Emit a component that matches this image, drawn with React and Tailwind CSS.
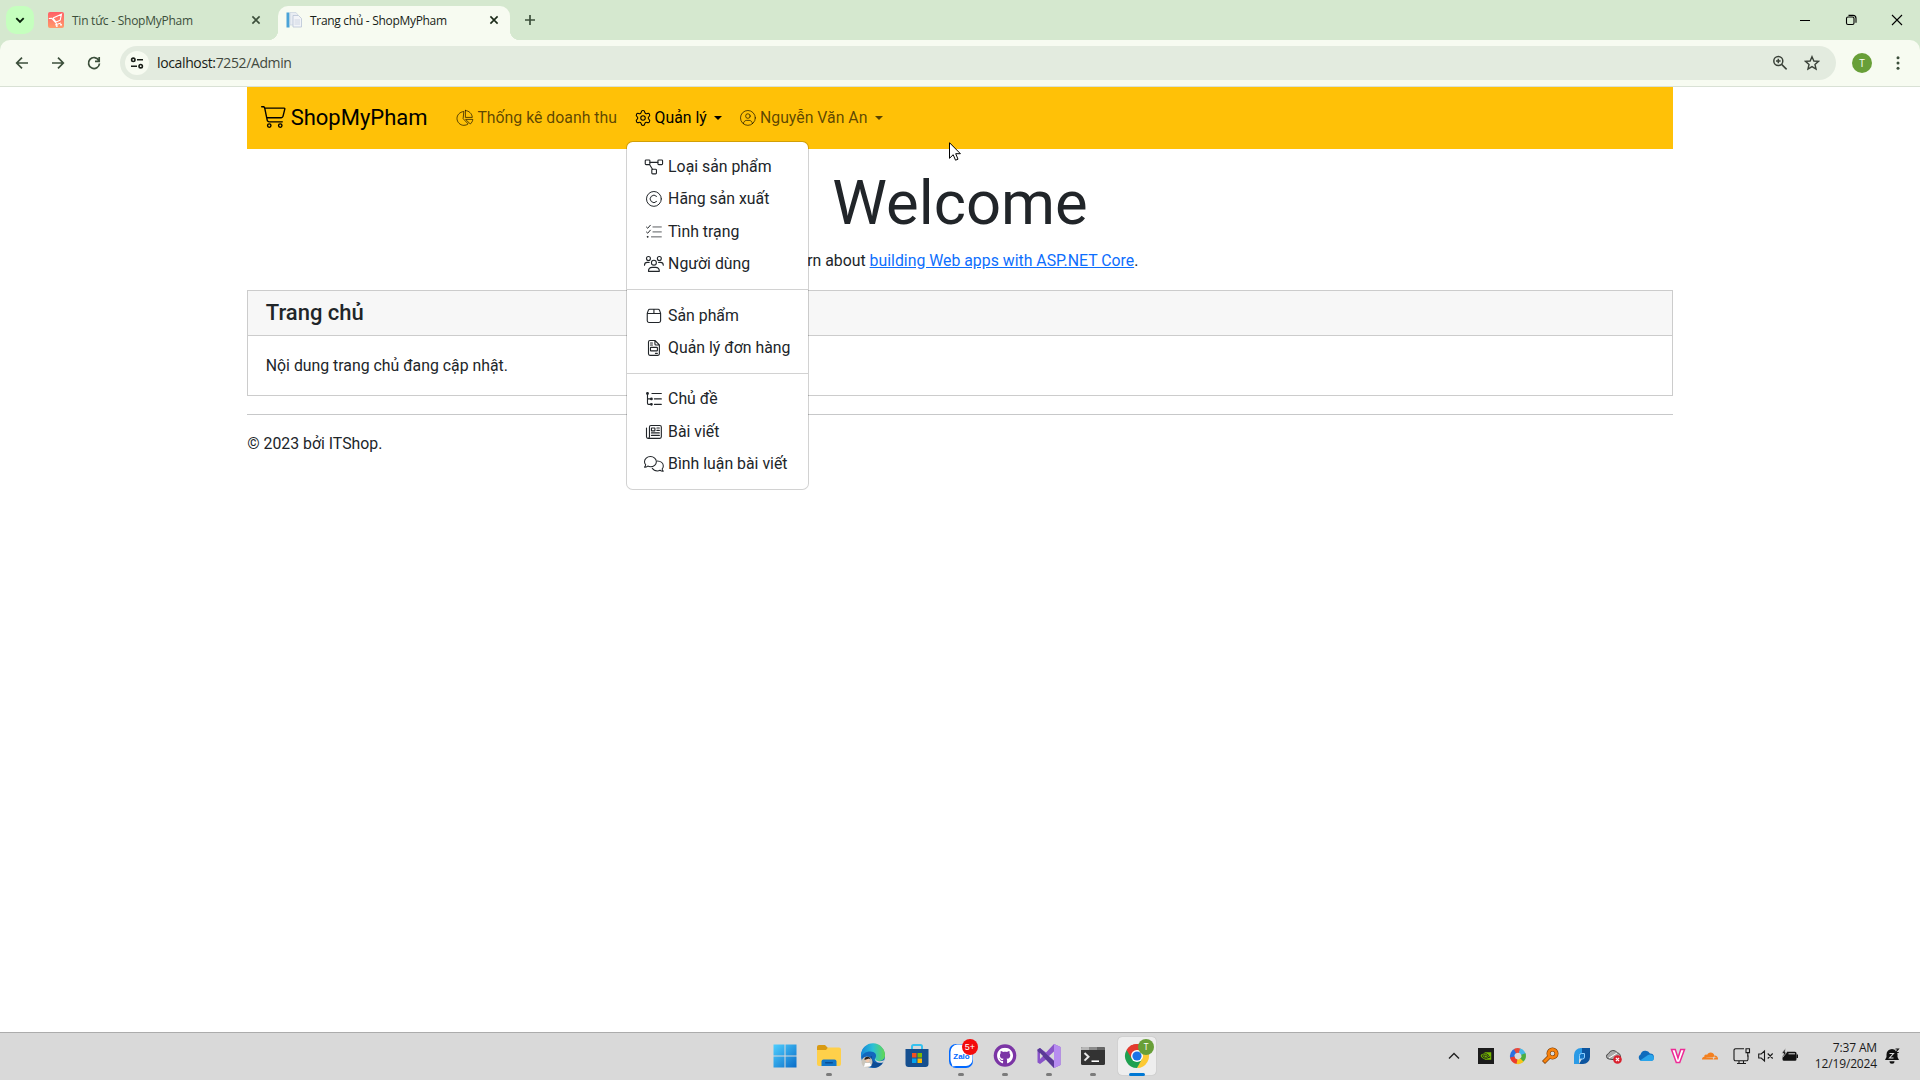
import React from "react";
import { Settings } from "lucide-react";
import { FaGithub } from "react-icons/fa";
import { SiNvidia, SiCloudflare } from "react-icons/si";

/* ---------- thin outline icons used by the site ---------- */

function Line({ w = 512, size = 15.84, sw = 32, children }) {
  return (
    <svg
      viewBox={`0 0 ${w} 512`}
      width={(size * w) / 512}
      height={size}
      fill="none"
      stroke="currentColor"
      strokeWidth={sw}
      strokeLinecap="round"
      strokeLinejoin="round"
      className="shrink-0 overflow-visible"
    >
      {children}
    </svg>
  );
}

const CartIcon = () => (
  <Line w={576} size={22}>
    <path
      fill="currentColor"
      stroke="none"
      d="M16 0C7.2 0 0 7.2 0 16s7.2 16 16 16H53.9c7.6 0 14.2 5.3 15.7 12.8l58.9 288c6.1 29.8 32.3 51.2 62.7 51.2H496c8.8 0 16-7.2 16-16s-7.2-16-16-16H191.2c-15.2 0-28.3-10.7-31.4-25.6L152 288H466.5c29.4 0 55-20 62.1-48.5L570.6 71.8c5-20.2-10.2-39.8-31-39.8H99.1C92.5 13 74.4 0 53.9 0H16zm90.1 64H539.5L497.6 231.8C494 246 481.2 256 466.5 256H145.4L106.1 64zM168 456a24 24 0 1 1 48 0 24 24 0 1 1 -48 0zm80 0a56 56 0 1 0 -112 0 56 56 0 1 0 112 0zm200-24a24 24 0 1 1 0 48 24 24 0 1 1 0-48zm0 80a56 56 0 1 0 0-112 56 56 0 1 0 0 112z"
    />
  </Line>
);

const PieIcon = () => (
  <Line w={576}>
    <path d="M304 17v223h223C520 120 424 24 304 17z" />
    <path d="M240 50C120 65 32 160 32 272c0 123 101 224 224 224 52 0 98-16 137-46L240 290z" />
    <path d="M322 304h222c-7 56-32 104-72 140z" />
  </Line>
);

const UserIcon = () => (
  <Line>
    <circle cx="256" cy="256" r="240" />
    <circle cx="256" cy="196" r="74" />
    <path d="M108 440c8-60 52-104 108-104h80c56 0 100 44 108 104" />
  </Line>
);

const DiagramIcon = () => (
  <Line w={576} sw={36}>
    <rect x="8" y="32" width="150" height="150" rx="28" />
    <rect x="418" y="32" width="150" height="150" rx="28" />
    <rect x="220" y="330" width="150" height="150" rx="28" />
    <path d="M158 108h260M146 176l96 154" />
  </Line>
);

const CopyrightIcon = () => (
  <Line>
    <circle cx="256" cy="256" r="240" />
    <path d="M341 341a120 120 0 1 1 0-170" />
  </Line>
);

const ListCheckIcon = () => (
  <Line>
    <path d="M16 100l40 38 84-98M16 260l40 38 84-98" />
    <path d="M224 96h272M224 256h272M176 416h320" opacity=".75" />
    <circle cx="48" cy="416" r="14" fill="currentColor" />
  </Line>
);

const UsersIcon = () => (
  <Line w={640} sw={36}>
    <circle cx="144" cy="80" r="64" />
    <circle cx="496" cy="80" r="64" />
    <circle cx="320" cy="216" r="80" />
    <path d="M16 298c0-50 42-90 92-90h58M624 298c0-50-42-90-92-90h-58" />
    <path d="M144 496c0-74 54-128 120-128h112c66 0 120 54 120 128z" />
  </Line>
);

const BoxIcon = () => (
  <Line w={448} sw={36}>
    <path d="M8 176v240c0 30 20 52 52 52h328c32 0 52-22 52-52V176zM8 176l34-100c8-24 24-36 48-36h268c24 0 40 12 48 36l34 100M224 40v136" />
  </Line>
);

const InvoiceIcon = () => (
  <Line w={384} sw={36}>
    <path d="M64 16h160l144 144v288c0 27-21 48-48 48H64c-27 0-48-21-48-48V64c0-27 21-48 48-48zM224 16v112c0 18 14 32 32 32h112M80 96h64M80 160h64M240 432h64" />
    <rect x="80" y="240" width="224" height="112" rx="16" />
  </Line>
);

const TreeIcon = () => (
  <Line sw={36}>
    <g fill="currentColor">
      <circle cx="48" cy="80" r="28" />
      <circle cx="176" cy="256" r="26" />
      <circle cx="176" cy="432" r="26" />
    </g>
    <path d="M48 80v320c0 18 14 32 32 32h96M48 256h128M192 80h304M272 256h224M272 432h224" />
  </Line>
);

const NewsIcon = () => (
  <Line sw={36}>
    <path d="M160 48h288c27 0 48 21 48 48v320c0 27-21 48-48 48H64c-27 0-48-21-48-48V128M64 464c27 0 48-21 48-48V96c0-27 21-48 48-48" />
    <rect x="176" y="128" width="112" height="96" rx="8" />
    <path d="M352 128h80M352 208h80M176 288h256M176 368h256" />
  </Line>
);

const CommentsIcon = () => (
  <Line w={640} sw={34}>
    <path d="M208 16C100 16 16 92 16 184c0 38 14 72 38 98-4 34-22 58-38 80 44 4 80-16 106-36 26 14 56 24 86 24 108 0 192-74 192-166S316 16 208 16z" />
    <path d="M432 160c108 4 192 72 192 162 0 38-14 70-38 98 4 32 22 52 38 72-44 4-80-12-106-32-26 14-56 22-86 22-70 0-132-34-166-86" />
  </Line>
);

/* ---------- browser chrome ---------- */

function Stroke({ size = 16, sw = 1.7, className = "", children }) {
  return (
    <svg
      viewBox="0 0 16 16"
      width={size}
      height={size}
      fill="none"
      stroke="currentColor"
      strokeWidth={sw}
      className={`shrink-0 ${className}`}
    >
      {children}
    </svg>
  );
}

const CloseX = () => (
  <Stroke sw={1.6}>
    <path d="M4.4 4.4l7.2 7.2M11.6 4.4l-7.2 7.2" />
  </Stroke>
);

function TabStrip() {
  return (
    <div className="flex h-10 items-start bg-[#d5e8cf] text-[#1b2a19]">
      <div className="ml-1.5 mt-1.5 flex size-7 items-center justify-center rounded-[10px] bg-[#c5ffbe] text-[#08210a]">
        <Stroke sw={1.9}>
          <path d="M4.3 6.2L8 9.9l3.7-3.7" />
        </Stroke>
      </div>
      <div className="ml-3.5 mt-1.5 flex h-7 w-[230px] items-center text-[#3c4f3b]">
        <svg viewBox="0 0 16 16" width="16" height="16" className="shrink-0">
          <defs>
            <linearGradient id="shop" x1="0" y1="0" x2="0" y2="1">
              <stop offset="0" stopColor="#ff5f67" />
              <stop offset="1" stopColor="#ff9b6b" />
            </linearGradient>
          </defs>
          <rect width="16" height="16" rx="2" fill="url(#shop)" />
          <path
            d="M.8 6.500l3-.2 5 5.700M5 6l8.500-3.800-1.300 6-4.700 2M5 6l3 4"
            stroke="#fff"
            strokeWidth="1.100"
            fill="none"
          />
          <path d="M7 13l6-2" stroke="#fff" />
          <circle cx="8.800" cy="14" r="1" fill="#fff" />
          <circle cx="13" cy="12.800" r="1" fill="#fff" />
        </svg>
        <span className="ml-2 w-[176px] whitespace-nowrap pt-0.5 text-[12px] tracking-[-0.25px]">
          Tin tức - ShopMyPham
        </span>
        <CloseX />
      </div>
      <div className="relative mt-1.5 flex h-[34px] w-[232px] items-center rounded-t-[10px] bg-[#f7fbf1] pb-1.5 pl-2">
        <div className="absolute -left-2.5 bottom-0 size-2.5 bg-[radial-gradient(circle_at_0_0,transparent_10px,#f7fbf1_10.5px)]" />
        <div className="absolute -right-2.5 bottom-0 size-2.5 bg-[radial-gradient(circle_at_100%_0,transparent_10px,#f7fbf1_10.5px)]" />
        <svg viewBox="0 0 16 16" width="16" height="16" className="shrink-0">
          <rect x="0.500" y="0.500" width="3" height="15" fill="#4aa3d8" />
          <path d="M4 .5h6l2 2.500v10H4z" fill="#e9edf3" stroke="#c9d2df" strokeWidth=".7" />
          <path d="M7 3.500h5.500l3 3v8.500H7z" fill="#f2f4f8" stroke="#b9c4d6" strokeWidth=".8" />
          <path d="M8.500 8h5.500M8.500 10h5.500M8.500 12h5.500" stroke="#c7cfdd" strokeWidth=".8" />
        </svg>
        <span className="ml-2 w-[176px] whitespace-nowrap pt-0.5 text-[12px] tracking-[-0.3px] text-[#181d17]">
          Trang chủ - ShopMyPham
        </span>
        <CloseX />
      </div>
      <div className="ml-3 mt-3 text-[#3c4f3b]">
        <Stroke sw={1.700}>
          <path d="M8 3v10M3 8h10" />
        </Stroke>
      </div>
      <div className="ml-auto flex h-10 items-center text-black">
        <div className="flex w-[46px] justify-center">
          <Stroke sw={1}>
            <path d="M3 8.500h10" />
          </Stroke>
        </div>
        <div className="flex w-[46px] justify-center">
          <Stroke sw={1.100}>
            <rect x="3.500" y="5" width="7.500" height="7.500" rx="1.500" />
            <path d="M5.500 3.400h4.500a3 3 0 0 1 3 3v4.300" />
          </Stroke>
        </div>
        <div className="flex w-[46px] justify-center">
          <Stroke sw={1.100}>
            <path d="M3 3l10 10M13 3L3 13" />
          </Stroke>
        </div>
      </div>
    </div>
  );
}

function Toolbar() {
  return (
    <div className="bg-[#d5e8cf]">
      <div className="flex h-[47px] items-center rounded-t-[10px] border-b border-[#d9e1d5] bg-[#f7fbf1] text-[#3c4f3b]">
        <div className="ml-3.5 flex gap-5">
          <Stroke>
            <path d="M14 8H3M8 2.700L2.700 8 8 13.300" />
          </Stroke>
          <Stroke>
            <path d="M2 8h11M8 2.700L13.300 8 8 13.300" />
          </Stroke>
          <Stroke>
            <path d="M12.800 5.300A5.500 5.500 0 1 0 13.500 8.500M13.200 2v4.300H9" />
          </Stroke>
        </div>
        <div className="ml-[18px] flex h-[34px] w-[1716px] items-center rounded-full bg-[#e3ebdf] pl-[5px]">
          <div className="flex size-6 items-center justify-center rounded-full bg-[#f7fbf1] text-[#181d17]">
            <Stroke sw={1.600}>
              <circle cx="4.300" cy="4.800" r="1.700" />
              <path d="M8 4.800h6M2 11.200h6" />
              <circle cx="11.700" cy="11.200" r="1.700" />
            </Stroke>
          </div>
          <span className="ml-[8px] text-[14px] leading-5 tracking-[-0.370px] text-[#181d17]">
            localhost:<span className="text-[#424940]">7252/Admin</span>
          </span>
          <div className="ml-auto mr-4 flex gap-4 text-[#3a4138]">
            <Stroke size={16} sw={1.500}>
              <circle cx="6.300" cy="6" r="4.500" />
              <path d="M9.600 9.400l5 5M4 6h4.600M6.300 3.700v4.600" />
            </Stroke>
            <Stroke size={16} sw={1.400}>
              <path d="M8 1.700l1.850 4.300 4.650.4-3.530 3.070 1.060 4.560L8 11.600l-4.030 2.430 1.060-4.560L1.500 6.400l4.650-.4z" />
            </Stroke>
          </div>
        </div>
        <div className="ml-4 flex size-5 items-center justify-center rounded-full bg-[#689f38] text-[10px] text-white">
          T
        </div>
        <svg viewBox="0 0 16 16" width="16" height="16" className="ml-[18px]" fill="currentColor">
          <circle cx="8" cy="2.700" r="1.500" />
          <circle cx="8" cy="8" r="1.500" />
          <circle cx="8" cy="13.300" r="1.500" />
        </svg>
      </div>
    </div>
  );
}

/* ---------- site ---------- */

const Caret = () => (
  <span className="ml-[4px] inline-block border-x-[4.75px] border-t-[4.75px] border-x-transparent border-t-current" />
);

const GROUPS = [
  [
    [DiagramIcon, "Loại sản phẩm"],
    [CopyrightIcon, "Hãng sản xuất"],
    [ListCheckIcon, "Tình trạng"],
    [UsersIcon, "Người dùng"],
  ],
  [
    [BoxIcon, "Sản phẩm"],
    [InvoiceIcon, "Quản lý đơn hàng"],
  ],
  [
    [TreeIcon, "Chủ đề"],
    [NewsIcon, "Bài viết"],
    [CommentsIcon, "Bình luận bài viết"],
  ],
];

function Menu() {
  return (
    <div className="absolute left-0 top-[43.500px] z-10 w-[183px] rounded-[6.600px] border border-black/[.175] bg-white bg-clip-padding py-[8.800px] text-[#212529]">
      {GROUPS.map((items, g) => (
        <div key={g} className={g ? "mt-[8.800px] border-t border-black/[.175] pt-[8.800px]" : ""}>
          {items.map(([Icon, label]) => (
            <div key={label} className="flex h-[32.560px] items-center whitespace-nowrap px-[17.700px]">
              <span className="mr-[3.900px] flex w-[19.800px] shrink-0 justify-center">
                <Icon />
              </span>
              {label}
            </div>
          ))}
        </div>
      ))}
    </div>
  );
}

function Site() {
  return (
    <main
      className="mx-auto w-[1425.600px] flex-1 text-[15.840px] leading-[23.760px] text-[#212529]"
      style={{ fontFamily: 'Roboto, "Liberation Sans", sans-serif' }}
    >
      <nav className="flex h-[61.600px] items-center bg-[#ffc107] pl-[14px] text-black/65">
        <div className="flex items-center text-[22px] leading-[33px] text-black">
          <span className="-mt-[2px]">
            <CartIcon />
          </span>
          <span className="ml-[4.700px]">ShopMyPham</span>
        </div>
        <div className="ml-[28px] flex items-center">
          <PieIcon />
          <span className="ml-[4px]">Thống kê doanh thu</span>
        </div>
        <div className="relative ml-[8.800px] flex h-[41.400px] items-center px-[8.800px] text-black">
          <Settings size={18} strokeWidth={1.400} className="-mx-[1px]" />
          <span className="ml-[4px] mr-[3.500px]">Quản lý</span>
          <Caret />
          <Menu />
        </div>
        <div className="ml-[9.100px] flex items-center">
          <UserIcon />
          <span className="ml-[4px] mr-[4px]">Nguyễn Văn An</span>
          <Caret />
        </div>
      </nav>
      <div className="mt-[18.300px] text-center">
        <h1 className="mb-[8.100px] text-[61.600px] leading-[73.920px]">Welcome</h1>
        <p className="mb-[17.600px]">
          Learn about{" "}
          <a className="text-[#0d6efd] underline">building Web apps with ASP.NET Core</a>.
        </p>
      </div>
      <section className="border border-[#cccccc]">
        <h5 className="border-b border-[#cccccc] bg-[#f7f7f7] px-[17.600px] py-[8.800px] text-[22px] font-medium leading-[26.400px]">
          Trang chủ
        </h5>
        <p className="p-[17.600px]">Nội dung trang chủ đang cập nhật.</p>
      </section>
      <hr className="my-[17.600px] border-[#c7c8c9]" />
      <footer>© 2023 bởi ITShop.</footer>
    </main>
  );
}

/* ---------- taskbar ---------- */

function App24({ children, dot }) {
  return (
    <div className="relative flex h-full w-11 items-center justify-center pb-0.5">
      <svg viewBox="0 0 24 24" width="24" height="24" className="overflow-visible">
        {children}
      </svg>
      {dot && <div className="absolute bottom-1 h-[3px] w-1.5 rounded-full bg-[#7b7b7b]" />}
    </div>
  );
}

function Tray({ narrow, className = "", children }) {
  return (
    <div className={`flex justify-center ${narrow ? "w-6" : "w-8"} ${className}`}>
      <svg viewBox="0 0 16 16" width="16" height="16" className="overflow-visible">
        {children}
      </svg>
    </div>
  );
}

function Taskbar() {
  return (
    <div className="grid h-12 grid-cols-[763px_396px_1fr] border-t border-[#acacac] bg-[#d9d9d9] text-[#1a1a1a]">
      <div />
      <div className="flex h-full items-center">
        <App24>
          <defs>
            <linearGradient id="win" x1="0" y1="0" x2="1" y2="1">
              <stop offset="0" stopColor="#4fcfff" />
              <stop offset="1" stopColor="#0a6cc8" />
            </linearGradient>
          </defs>
          <path d="M.5.5h11v11H.5zM12.500.5h11v11h-11zM.5 12.500h11v11H.5zM12.500 12.500h11v11h-11z" fill="url(#win)" />
        </App24>
        <App24 dot>
          <path d="M0 3a2 2 0 0 1 2-2h6l3 3v4H0z" fill="#d99a12" />
          <path d="M0 6h9l2-2.500h11a2 2 0 0 1 2 2V20a2 2 0 0 1-2 2H2a2 2 0 0 1-2-2z" fill="#ffd04a" />
          <path d="M4.500 22v-4.500a2 2 0 0 1 2-2h11a2 2 0 0 1 2 2V22z" fill="#1277c9" />
          <rect x="8" y="18" width="8" height="1.500" rx=".7" fill="#0a4f94" />
        </App24>
        <App24>
          <defs>
            <linearGradient id="edge" x1="0" y1="0" x2="1" y2="0">
              <stop offset="0" stopColor="#1687d9" />
              <stop offset=".5" stopColor="#2bc0d6" />
              <stop offset="1" stopColor="#62d94e" />
            </linearGradient>
          </defs>
          <circle cx="12" cy="12" r="12" fill="#1267bd" />
          <path d="M0 11A12 12 0 0 1 24 11.500c0 3.500-3 5.500-6.500 5.500-3 0-4.500-1-3.500-2.300 3-4-.5-7.200-4.500-7.200C4.500 7.500.5 10 0 15z" fill="url(#edge)" />
          <path d="M11 12c-1 5 4 9 11 6.200C19 24 13 25 9 22c-3-3-2-9 2-10z" fill="#0c4b94" />
          <path d="M14 14.500c1 3 5 3.500 9.500 1.500l-1 2.200c-4 1.500-8.500 0-8.500-3.700z" fill="#d9d9d9" />
          <circle cx="6" cy="18" r="5.500" fill="#c9c5bb" />
          <circle cx="6.500" cy="16" r="2.200" fill="#f1c9ad" />
          <path d="M3.500 16c-.5-4 6-4.500 6-.5L8 14.500z" fill="#2c2522" />
          <path d="M3 23l1-4h5l1.500 3z" fill="#fff" />
        </App24>
        <App24>
          <path d="M7 6V2.500a1.500 1.500 0 0 1 1.500-1.500h7A1.500 1.500 0 0 1 17 2.500V6" fill="none" stroke="#37c2ef" strokeWidth="2" />
          <path d="M.5 5h23v15a3 3 0 0 1-3 3h-17a3 3 0 0 1-3-3z" fill="#154f8f" />
          <path d="M7 9h4.500v4.500H7z" fill="#f25022" />
          <path d="M12.500 9H17v4.500h-4.500z" fill="#7fba00" />
          <path d="M7 14.500h4.500V19H7z" fill="#00a4ef" />
          <path d="M12.500 14.500H17V19h-4.500z" fill="#ffb900" />
        </App24>
        <App24 dot>
          <rect x="0" y="0" width="24" height="24" rx="7" fill="#0068ff" />
          <path d="M8 .5h9a6.500 6.500 0 0 1 6.500 6.500v8.500A6.500 6.500 0 0 1 17 22H7l-4 .5C4 21 1.500 19 1.500 15V8A7.500 7.500 0 0 1 8 .5z" fill="#fff" />
          <text x="12.500" y="14.500" textAnchor="middle" fontSize="8" fontWeight="600" fill="#0068ff" fontFamily="Liberation Sans, sans-serif">Zalo</text>
          <circle cx="21" cy="3" r="8" fill="#f30b0b" />
          <text x="21" y="6" textAnchor="middle" fontSize="9" fill="#fff" fontFamily="Liberation Sans, sans-serif">5+</text>
        </App24>
        <App24 dot>
          <circle cx="12" cy="11.500" r="11.300" fill="#7b35a5" />
          <g transform="translate(3.800 3.500)">
            <FaGithub size={16.500} color="#fff" />
          </g>
        </App24>
        <App24 dot>
          <path d="M17 0l6.500 3v18L17 24l-8-8.500L3 20l-2.500-1.500v-13L3 4l6 4.500z" fill="#8a55c9" />
          <path d="M17 0l6.500 3v18L17 24z" fill="#b78cf0" />
          <path d="M.5 5.500L3 4l14 13v7L.5 7z" fill="#5a3a96" />
          <path d="M3 9v6l3-3zM17 7.500v9L12 12z" fill="#d9d9d9" />
        </App24>
        <App24 dot>
          <rect x="0" y="3" width="24" height="18" rx="1.500" fill="#333" />
          <path d="M0 6V4.500A1.500 1.500 0 0 1 1.500 3H8v3z" fill="#b7b7b7" />
          <path d="M8 3h8v3H8z" fill="#8b8b8b" />
          <path d="M16 3h6.500A1.500 1.500 0 0 1 24 4.500V6h-8z" fill="#666" />
          <path d="M3.500 9l4 3.800-4 3.800" fill="none" stroke="#e8e8e8" strokeWidth="2" />
          <path d="M10.500 17.200h7.500" stroke="#fff" strokeWidth="1.600" />
        </App24>
        <div className="relative flex h-full w-11 items-center justify-center pb-0.5">
          <div className="flex size-[38px] items-center justify-center rounded bg-[#eeeeee] shadow-[0_0_1px_#999]">
            <svg viewBox="0 0 24 24" width="24" height="24" className="overflow-visible">
              <path d="M12 12L1.600 6A12 12 0 0 1 22.400 6z" fill="#e33b2e" />
              <path d="M12 12L22.400 6A12 12 0 0 1 12 24l3-8z" fill="#fcc934" />
              <path d="M12 12L1.600 6A12 12 0 0 0 12 24l5-9z" fill="#1fa04f" />
              <path d="M12 6h10.400L17.200 15z" fill="#fcc934" />
              <path d="M12 6h10.400A12 12 0 0 0 1.600 6L7 15z" fill="#e33b2e" />
              <circle cx="12" cy="12" r="6" fill="#fff" />
              <circle cx="12" cy="12" r="4.600" fill="#1a73e8" />
              <circle cx="21" cy="3" r="8" fill="#689f38" />
              <text x="21" y="6.200" textAnchor="middle" fontSize="8.500" fill="#fff" fontFamily="Open Sans, sans-serif">T</text>
            </svg>
          </div>
          <div className="absolute bottom-1 h-[3px] w-4 rounded-full bg-[#0078d4]" />
        </div>
      </div>
      <div className="flex items-center justify-end pb-0.5 pr-5">
        <Tray>
          <path d="M3 10.500L8 5.500l5 5" fill="none" stroke="#222" strokeWidth="1.400" />
        </Tray>
        <Tray>
          <rect width="16" height="16" fill="#1c1c1c" />
          <g transform="translate(2.500 2.500)">
            <SiNvidia size={11} color="#76b900" />
          </g>
        </Tray>
        <Tray>
          <g fill="none" strokeWidth="4.500">
            <path d="M2.500 10A5.700 5.700 0 0 1 6 2.700" stroke="#2b6fe0" />
            <path d="M5 3.200A5.700 5.700 0 0 1 10 2.800" stroke="#e8483a" />
            <path d="M9.500 2.600A5.700 5.700 0 0 1 13.600 7" stroke="#45b7e8" />
            <path d="M13.400 6a5.700 5.700 0 0 1-2.900 7" stroke="#4cae3f" />
            <path d="M12 12.200a5.700 5.700 0 0 1-6.500 1" stroke="#f8c51c" />
            <path d="M7 13.600A5.700 5.700 0 0 1 2.300 9" stroke="#ea3b2e" />
          </g>
        </Tray>
        <Tray>
          <circle cx="10.500" cy="5.500" r="4" fill="none" stroke="#7a3b05" strokeWidth="4" />
          <path d="M7.500 8.500L1.500 14.500" stroke="#7a3b05" strokeWidth="4.200" />
          <circle cx="10.500" cy="5.500" r="4" fill="none" stroke="#f7820d" strokeWidth="2.800" />
          <path d="M7.800 8.200L2 14" stroke="#f7820d" strokeWidth="3" />
        </Tray>
        <Tray>
          <path d="M0 16V7a7 7 0 0 1 7-7h1v8l-3 3v5z" fill="#2b9be6" />
          <path d="M8 0h8v9a7 7 0 0 1-7 7H5l3-5z" fill="#0d559f" />
          <path d="M5.500 11V7.500a2 2 0 0 1 2-2h3V9a2 2 0 0 1-2 2z" fill="#1372c2" stroke="#8fd0ff" strokeWidth="1" />
        </Tray>
        <Tray>
          <path d="M3 11a2.700 2.700 0 0 1-.5-5.300A5 5 0 0 1 11.500 5c2 0 3 2 3 4L10 12z" fill="#aaa" stroke="#444" strokeWidth="1" />
          <path d="M3 10l8-5" stroke="#fff" />
          <circle cx="11.500" cy="11.500" r="4.300" fill="#d9202e" />
          <path d="M9.900 9.900l3.200 3.200M13.100 9.900l-3.200 3.200" stroke="#fff" strokeWidth="1.200" />
        </Tray>
        <Tray>
          <path d="M3.500 13A3.500 3.500 0 0 1 2.500 6.500 5.200 5.200 0 0 1 12 5.500 3.800 3.800 0 0 1 13 13z" fill="#0f6cbd" />
          <path d="M2 12.500l8-5.500a4 4 0 0 1 6 3 3 3 0 0 1-3 3H3.500z" fill="#2aa4ea" />
        </Tray>
        <Tray>
          <path d="M1.500 1.500h3.800L8 10l2.700-8.500h3.800L9.700 14.500H6.300z" fill="#fff" stroke="#ee2a96" strokeWidth="1.500" />
        </Tray>
        <Tray>
          <SiCloudflare size={16} color="#f38020" />
        </Tray>
        <Tray className="-mr-1">
          <g fill="none" stroke="#1a1a1a" strokeWidth="1.100">
            <path d="M10 .8H1.500a1.500 1.500 0 0 0-1.500 1.500v9a1.500 1.500 0 0 0 1.500 1.500h11a1.500 1.500 0 0 0 1.500-1.500V7.500M5 13v2.500M9.500 13v2.500M3 15.500h9" />
            <path d="M12 .8h3.500v3.800H12zM13.800 4.600v4" />
          </g>
        </Tray>
        <Tray narrow>
          <g fill="none" stroke="#1a1a1a" strokeWidth="1.100">
            <path d="M.7 6v4h2.500L6.500 13V3L3.200 6zM9.700 5.500l5 5M14.700 5.500l-5 5" />
          </g>
        </Tray>
        <Tray narrow>
          <path d="M5 3.800h8a1.500 1.500 0 0 1 1.500 1.500v6a1.500 1.500 0 0 1-1.500 1.500H2a1.500 1.500 0 0 1-1.500-1.500V8z" fill="#111" />
          <path d="M6.500 5.300h6.500v1H6.500z" fill="#d9d9d9" />
          <path d="M14.500 6.500H16v3.500h-1.500z" fill="#111" />
          <path d="M3.500.3L-.3 5.300h2L.7 9.300l4-5H3z" fill="#111" stroke="#d9d9d9" strokeWidth=".7" />
        </Tray>
        <div className="w-[75px] whitespace-nowrap text-right text-[12px] leading-4 tracking-[-0.150px]">
          <div>7:37 AM</div>
          <div>12/19/2024</div>
        </div>
        <svg viewBox="0 0 16 16" width="16" height="16" className="ml-[7px] overflow-visible">
          <path d="M1 12l1.500-3V6.500a5.500 5.500 0 0 1 11 0V9l1.500 3z" fill="#111" />
          <path d="M5.500 13.300h5a2.500 2.500 0 0 1-5 0z" fill="#111" />
          <path d="M5.500 5.500h4l-4 4.500h4" fill="none" stroke="#d9d9d9" strokeWidth="1.100" />
          <path d="M10.500 0h5v5h-3z" fill="#d9d9d9" />
          <path d="M11.500 1h3L11.500 4.500h3.200" fill="none" stroke="#111" strokeWidth="1.100" />
        </svg>
      </div>
    </div>
  );
}

export default function App() {
  return (
    <div
      className="relative flex h-[1080px] w-[1920px] flex-col overflow-hidden bg-white"
      style={{ fontFamily: '"Open Sans", "Noto Sans", sans-serif' }}
    >
      <TabStrip />
      <Toolbar />
      <Site />
      <Taskbar />
      <svg viewBox="0 0 12 19" width="12" height="19" className="absolute left-[949px] top-[142px] z-20">
        <path
          d="M.5.7v15.600l3.700-3.600 2.300 5.500 2.500-1-2.300-5.500h4.700z"
          fill="#fff"
          stroke="#000"
          strokeWidth="1"
        />
      </svg>
    </div>
  );
}
